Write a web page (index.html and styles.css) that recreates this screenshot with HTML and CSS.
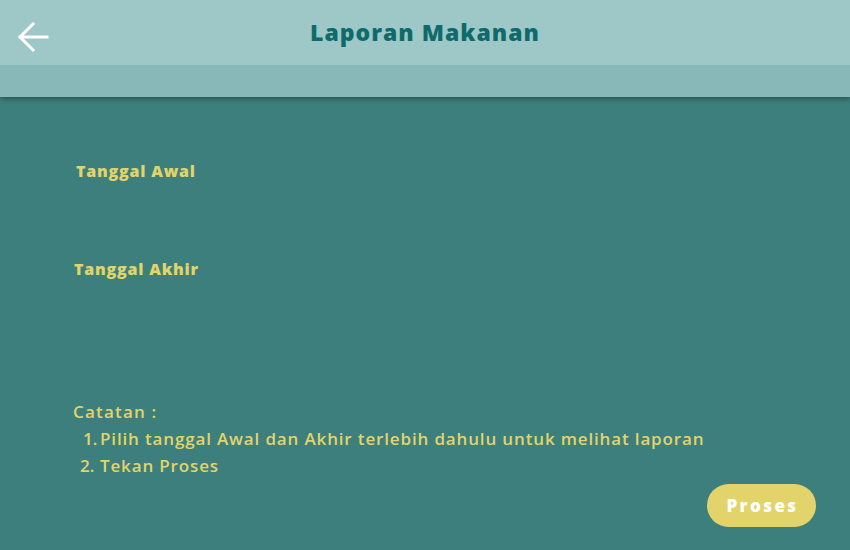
FILE: index.html
```html
<!DOCTYPE html>
<html>
<head>
<meta charset="utf-8">
<link rel="stylesheet" href="styles.css">
</head>
<body>
<div class="app">
  <header class="topbar">
    <div class="appbar">
      <button class="back" aria-label="Kembali">
        <svg width="34" height="32" viewBox="0 0 34 32"><path d="M32 16H5M18 3L5 16l13 13" fill="none" stroke="#fff" stroke-width="3" stroke-linecap="square"/></svg>
      </button>
      <h1 class="title">Laporan Makanan</h1>
    </div>
    <div class="band"></div>
  </header>
  <main class="content">
    <div class="field field-awal">Tanggal Awal</div>
    <div class="field field-akhir">Tanggal Akhir</div>
    <div class="notes">
      <div class="notes-title">Catatan :</div>
      <ol class="notes-list">
        <li><span class="num n1">1.</span>Pilih tanggal Awal dan Akhir terlebih dahulu untuk melihat laporan</li>
        <li><span class="num n2">2.</span>Tekan Proses</li>
      </ol>
    </div>
    <div class="actions">
      <button class="btn">Proses</button>
    </div>
  </main>
</div>
</body>
</html>
```
FILE: styles.css
```css
* { box-sizing: border-box; }
html, body { margin: 0; padding: 0; }
body {
  width: 850px;
  height: 550px;
  overflow: hidden;
  background: #3c7f7c;
  font-family: "Open Sans", sans-serif;
}
.app { display: flex; flex-direction: column; height: 550px; }
.topbar {
  position: relative;
  z-index: 2;
  box-shadow: 0 2px 5px rgba(0,0,0,0.35);
}
.appbar {
  height: 65px;
  background: #9dc8c7;
  display: flex;
  align-items: center;
  justify-content: center;
  position: relative;
}
.back {
  position: absolute;
  left: 15px;
  top: 21px;
  width: 34px;
  height: 32px;
  padding: 0;
  border: 0;
  background: none;
  display: flex;
}
.title {
  margin: 0;
  font-size: 23px;
  font-weight: 800;
  letter-spacing: 1px;
  line-height: 30px;
  color: #0f6b6b;
  transform: translateY(-1px);
}
.band { height: 32px; background: #88b8b7; }
.content {
  flex: 1;
  display: flex;
  flex-direction: column;
  padding: 0 0 0 73px;
  color: #e2d46a;
}
.field {
  font-size: 16px;
  font-weight: 800;
  letter-spacing: 0.8px;
  line-height: 20px;
}
.field-awal { margin-top: 64px; margin-left: 3px; }
.field-akhir { margin-top: 78px; margin-left: 1px; }
.notes {
  margin-top: 120px;
  font-size: 17px;
  font-weight: 600;
  letter-spacing: 0.85px;
  line-height: 27px;
}
.notes-title { line-height: 26px; letter-spacing: 1.2px; }
.notes-list { list-style: none; margin: 0; padding: 0; }
.notes-list li { display: flex; }
.num { display: inline-block; letter-spacing: 0; }
.n1 { margin-left: 10px; width: 17px; }
.n2 { margin-left: 7px; width: 20px; }
.actions {
  display: flex;
  justify-content: flex-end;
  padding-right: 34px;
  margin-top: 5px;
}
.btn {
  width: 109px;
  height: 43px;
  border: 0;
  border-radius: 22px;
  background: #e2d46a;
  color: #fff;
  font-family: "Open Sans", sans-serif;
  font-size: 17px;
  font-weight: 800;
  letter-spacing: 2.4px;
  padding: 0 0 0 2px;
}
```
